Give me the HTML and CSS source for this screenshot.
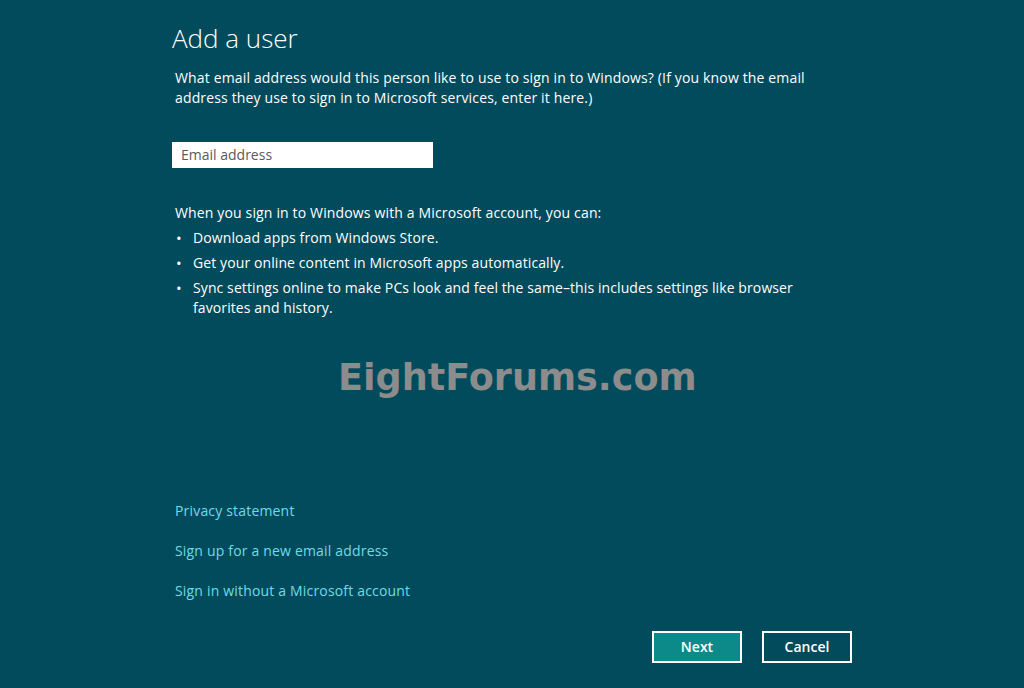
FILE: index.html
```html
<!DOCTYPE html>
<html>
<head>
<meta charset="utf-8">
<link rel="stylesheet" href="styles.css">
</head>
<body>
<div class="page">
  <h1 class="title">Add a user</h1>
  <p class="intro">What email address would this person like to use to sign in to Windows? (If you know the email address they use to sign in to Microsoft services, enter it here.)</p>
  <div class="field">Email address</div>
  <p class="lead">When you sign in to Windows with a Microsoft account, you can:</p>
  <ul class="list">
    <li>Download apps from Windows Store.</li>
    <li>Get your online content in Microsoft apps automatically.</li>
    <li>Sync settings online to make PCs look and feel the same–this includes settings like browser favorites and history.</li>
  </ul>
  <div class="watermark">EightForums.com</div>
  <div class="links">
    <a class="link">Privacy statement</a>
    <a class="link">Sign up for a new email address</a>
    <a class="link">Sign in without a Microsoft account</a>
  </div>
  <div class="buttons">
    <div class="btn btn-primary">Next</div>
    <div class="btn">Cancel</div>
  </div>
</div>
</body>
</html>
```
FILE: styles.css
```css
html, body {
  margin: 0;
  padding: 0;
  background: #024b5c;
  width: 1024px;
  height: 688px;
  overflow: hidden;
}
.page {
  font-family: "Open Sans", "Noto Sans", sans-serif;
  color: #ffffff;
  padding: 21px 0 0 172px;
  width: 680px;
}
.title {
  margin: 0;
  font-weight: 300;
  font-size: 26px;
  line-height: 34px;
}
.intro {
  margin: 13px 0 0 3px;
  font-size: 14px;
  line-height: 20px;
  width: 660px;
  letter-spacing: 0.15px;
}
.field {
  margin-top: 34px;
  width: 252px;
  height: 26px;
  background: #ffffff;
  color: #5a5a5a;
  font-size: 14px;
  line-height: 26px;
  padding-left: 9px;
}
.lead {
  margin: 35px 0 0 3px;
  font-size: 14px;
  line-height: 20px;
  letter-spacing: 0.15px;
}
.list {
  margin: 5px 0 0 3px;
  padding: 0;
  list-style: none;
  font-size: 14px;
  line-height: 20px;
  width: 640px;
  letter-spacing: 0.1px;
}
.list li {
  position: relative;
  padding-left: 18px;
  margin-bottom: 5px;
}
.list li::before {
  content: "•";
  position: absolute;
  left: 1px;
  font-size: 15px;
}
.watermark {
  margin: 38px 0 0 166px;
  font-family: "DejaVu Sans", Verdana, sans-serif;
  font-weight: bold;
  font-size: 36.6px;
  color: #8c8c8c;
  line-height: 44px;
}
.links {
  margin: 101px 0 0 3px;
  display: flex;
  flex-direction: column;
  align-items: flex-start;
  gap: 20px;
}
.link {
  color: #6fdbe6;
  font-size: 14px;
  line-height: 20px;
  letter-spacing: 0.18px;
}
.buttons {
  margin: 30px 0 0 480px;
  display: flex;
  gap: 20px;
}
.btn {
  width: 86px;
  height: 28px;
  border: 2px solid #ffffff;
  color: #ffffff;
  font-weight: 600;
  font-size: 14px;
  line-height: 28px;
  text-align: center;
}
.btn-primary {
  background: #0c8a8a;
}
```
